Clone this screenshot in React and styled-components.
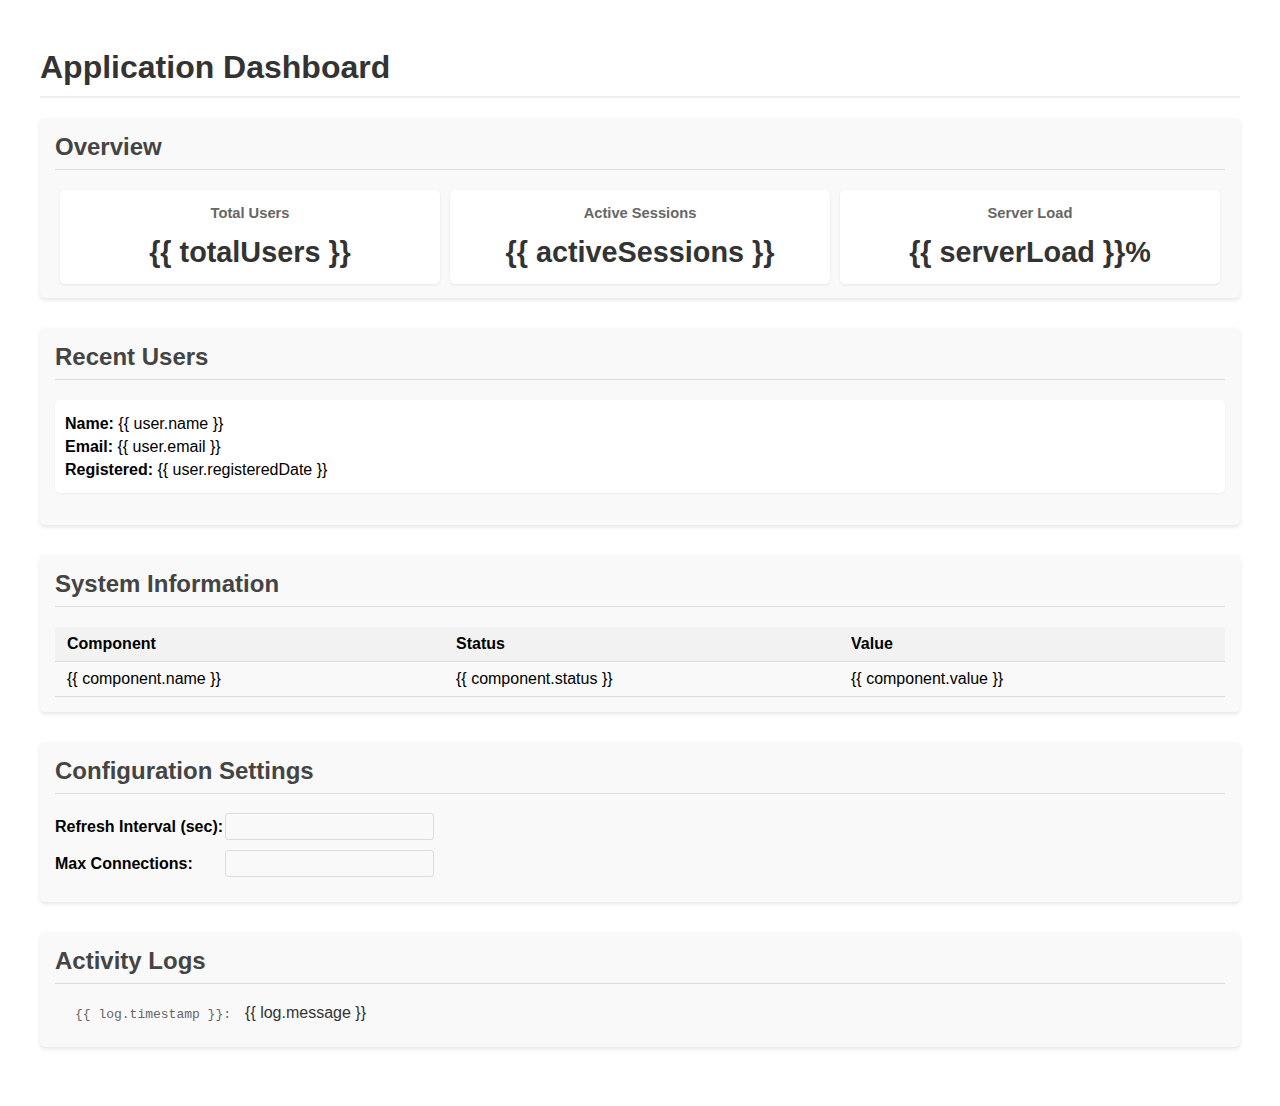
import React from "react";
import styled, { createGlobalStyle } from "styled-components";

const GlobalStyle = createGlobalStyle`
  body {
    margin: 0;
    background: #fff;
    font-family: "Liberation Sans", Arial, sans-serif;
    color: #333;
  }
`;

const Page = styled.div`
  max-width: 1200px;
  margin: 0 auto;
  padding: 49px 0 58px;
`;

const Title = styled.h1`
  margin: 0 0 20px;
  padding-bottom: 10px;
  font-size: 32px;
  line-height: 37px;
  color: #333;
  border-bottom: 2px solid #eee;
`;

const Section = styled.section`
  background: #f9f9f9;
  border-radius: 5px;
  box-shadow: 0 2px 4px rgba(0, 0, 0, 0.1);
  padding: 15px 15px ${(p) => p.$bottom || 15}px;
  margin-bottom: 30px;
`;

const SectionTitle = styled.h2`
  margin: 0 0 20px;
  padding-bottom: 8px;
  font-size: 24px;
  line-height: 28px;
  color: #444;
  border-bottom: 1px solid #ddd;
`;

const Stats = styled.div`
  display: grid;
  grid-template-columns: repeat(3, 1fr);
  gap: 10px;
  padding: 0 5px;
`;

const StatCard = styled.div`
  background: #fff;
  border-radius: 5px;
  box-shadow: 0 1px 3px rgba(0, 0, 0, 0.08);
  padding: 15px 10px 13px;
  text-align: center;
`;

const StatLabel = styled.div`
  font-size: 14.7px;
  line-height: 16px;
  font-weight: bold;
  color: #666;
  margin-bottom: 12px;
`;

const StatValue = styled.div`
  font-size: 28.8px;
  line-height: 38px;
  font-weight: bold;
  color: #333;
`;

const UserCard = styled.div`
  background: #fff;
  border-radius: 5px;
  box-shadow: 0 1px 2px rgba(0, 0, 0, 0.05);
  padding: 12px 10px;
  margin-bottom: 17px;
  font-size: 16px;
  line-height: 23px;
  color: #000;
`;

const Table = styled.table`
  width: 100%;
  table-layout: fixed;
  border-collapse: collapse;
  font-size: 16px;
  color: #000;
`;

const Th = styled.th`
  text-align: left;
  padding: 7px 12px;
  line-height: 20px;
  background: #f2f2f2;
  border-bottom: 1px solid #ddd;
  width: ${(p) => p.$w || "auto"};
`;

const Td = styled.td`
  padding: 7px 12px;
  line-height: 20px;
  border-bottom: 1px solid #ddd;
`;

const Fields = styled.div`
  margin-top: -1px;
`;

const FieldRow = styled.div`
  display: flex;
  align-items: center;
  margin-bottom: 10px;
`;

const FieldLabel = styled.label`
  width: 170px;
  font-size: 16px;
  font-weight: bold;
  color: #000;
`;

const Input = styled.input`
  box-sizing: border-box;
  width: 209px;
  height: 27px;
  border: 1px solid #ddd;
  border-radius: 3px;
  background: transparent;
  font-family: inherit;
`;

const LogItem = styled.div`
  display: flex;
  align-items: baseline;
  padding: 0 20px 10px;
`;

const LogTime = styled.span`
  font-family: "Liberation Mono", "Courier New", monospace;
  font-size: 13px;
  color: #666;
  margin-right: 14px;
`;

const LogMessage = styled.span`
  font-size: 16px;
  line-height: 18px;
  color: #333;
`;

export default function App() {
  return (
    <Page>
      <GlobalStyle />
      <Title>Application Dashboard</Title>

      <Section $bottom={14}>
        <SectionTitle>Overview</SectionTitle>
        <Stats>
          <StatCard>
            <StatLabel>Total Users</StatLabel>
            <StatValue>{"{{ totalUsers }}"}</StatValue>
          </StatCard>
          <StatCard>
            <StatLabel>Active Sessions</StatLabel>
            <StatValue>{"{{ activeSessions }}"}</StatValue>
          </StatCard>
          <StatCard>
            <StatLabel>Server Load</StatLabel>
            <StatValue>{"{{ serverLoad }}%"}</StatValue>
          </StatCard>
        </Stats>
      </Section>

      <Section>
        <SectionTitle>Recent Users</SectionTitle>
        <UserCard>
          <div><b>Name:</b> {"{{ user.name }}"}</div>
          <div><b>Email:</b> {"{{ user.email }}"}</div>
          <div><b>Registered:</b> {"{{ user.registeredDate }}"}</div>
        </UserCard>
      </Section>

      <Section>
        <SectionTitle>System Information</SectionTitle>
        <Table>
          <thead>
            <tr>
              <Th $w="365px">Component</Th>
              <Th $w="371px">Status</Th>
              <Th>Value</Th>
            </tr>
          </thead>
          <tbody>
            <tr>
              <Td>{"{{ component.name }}"}</Td>
              <Td>{"{{ component.status }}"}</Td>
              <Td>{"{{ component.value }}"}</Td>
            </tr>
          </tbody>
        </Table>
      </Section>

      <Section>
        <SectionTitle>Configuration Settings</SectionTitle>
        <Fields>
          <FieldRow>
            <FieldLabel>Refresh Interval (sec):</FieldLabel>
            <Input type="number" />
          </FieldRow>
          <FieldRow>
            <FieldLabel>Max Connections:</FieldLabel>
            <Input type="number" />
          </FieldRow>
        </Fields>
      </Section>

      <Section>
        <SectionTitle>Activity Logs</SectionTitle>
        <LogItem>
          <LogTime>{"{{ log.timestamp }}:"}</LogTime>
          <LogMessage>{"{{ log.message }}"}</LogMessage>
        </LogItem>
      </Section>
    </Page>
  );
}
